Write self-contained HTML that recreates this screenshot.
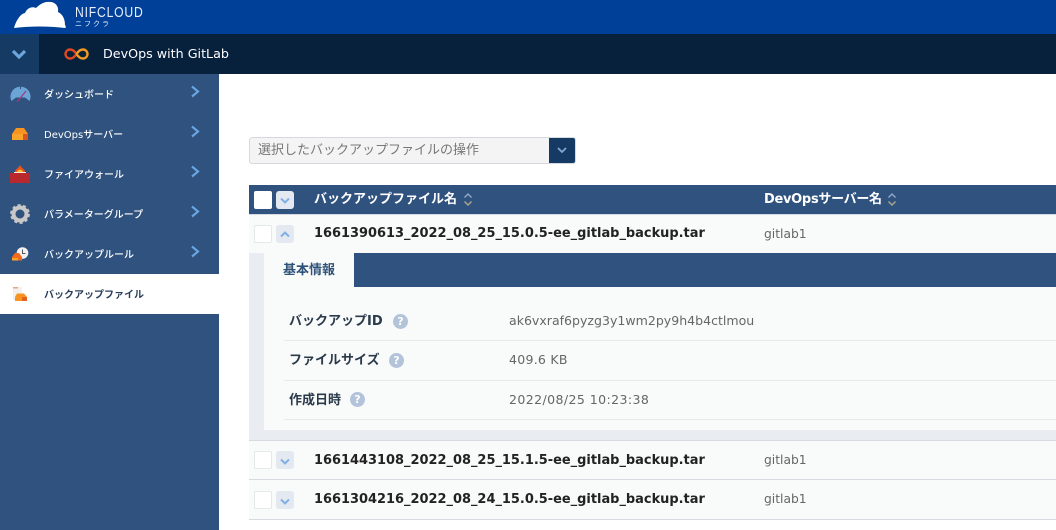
<!DOCTYPE html>
<html lang="ja"><head><meta charset="utf-8">
<style>
*{box-sizing:border-box;margin:0;padding:0}
html,body{width:1056px;height:530px;overflow:hidden;background:#fff}
body{position:relative;font-family:"DejaVu Sans","Noto Sans CJK JP",sans-serif;font-size:13px}
.a{position:absolute;white-space:nowrap}
.nav{left:44px;font-size:10px;color:#fff;line-height:16px;font-weight:500}
.chev{left:190px}
.cb{position:absolute;width:18px;height:18px;background:#fff;border:1px solid #e6e9ec;border-radius:2px;left:254px}
.tg{position:absolute;width:18px;height:18px;background:#e4e9f1;border-radius:3px;left:276px}
.fn{left:314px;font-size:12.95px;font-weight:700;color:#222;line-height:18px;font-family:"DejaVu Sans",sans-serif}
.sv{left:764px;font-size:12.3px;color:#666;line-height:18px}
.lb{left:289px;font-size:13px;font-weight:700;color:#2b3a4a;line-height:18px}
.val{left:509px;font-size:12.55px;color:#666;line-height:18px}
.q{position:absolute;width:15px;height:15px;border-radius:50%;background:#b3c3da;color:#fff;font-size:11px;font-weight:700;text-align:center;line-height:15px}
.hl{position:absolute;left:284px;right:0;height:1px;background:#e6e9ec}
</style></head><body>
<div class="a" style="left:0;top:0;width:1056px;height:34px;background:#004098"></div>
<svg class="a" style="left:13px;top:0" width="56" height="30" viewBox="0 0 56 30"><path d="M1 28C3 21 7 14 12 13C14 8 19 6 23 8C26 5 31 1 37 2C42 2 46 6 45 12C49 14 52 18 52 25C53 26 53 28 52 28C36 26 17 26 1 28Z" fill="#fff"/></svg>
<div class="a" style="left:75px;top:4px;font-size:15px;color:#e8eefa;letter-spacing:1px;line-height:17px;font-family:'Liberation Sans',sans-serif;transform:scaleX(.81);transform-origin:left top">NIFCLOUD</div>
<div class="a" style="left:75px;top:20px;font-size:7px;color:#e8eefa;letter-spacing:2px;line-height:9px">ニフクラ</div>
<div class="a" style="left:0;top:34px;width:1056px;height:40px;background:#07203c"></div>
<div class="a" style="left:0;top:34px;width:39px;height:40px;background:#153a63"></div>
<svg class="a" style="left:11px;top:48px" width="16" height="12" viewBox="0 0 16 12"><path d="M2 3L8 9L14 3" fill="none" stroke="#6aa5dc" stroke-width="3.2"/></svg>
<svg class="a" style="left:64px;top:47px" width="25" height="14" viewBox="0 0 25 14"><path d="M12.5 7C10 3 8 2.500 6 2.500A4.500 4.500 0 0 0 6 11.500C8 11.500 10 11 12.500 7" fill="none" stroke="#e2481f" stroke-width="2.400"/><path d="M12.500 7C15 3 17 2.500 19 2.500A4.500 4.500 0 0 1 19 11.500C17 11.500 15 11 12.500 7" fill="none" stroke="#f39a1f" stroke-width="2.400"/></svg>
<div class="a" style="left:103px;top:45px;font-size:12.7px;color:#fff;line-height:18px">DevOps with GitLab</div>

<div class="a" style="left:0;top:74px;width:219px;height:456px;background:#30527f"></div>
<div class="a" style="left:0;top:274px;width:219px;height:40px;background:#fff"></div>

<svg class="a" style="left:10px;top:84px" width="21" height="20" viewBox="0 0 21 20"><path d="M1.500 17A10 10 0 1 1 19.500 17L15 13.500H6Z" fill="#6ba5d8"/><path d="M7 18L16 7" stroke="#a83a7c" stroke-width="1.300"/><path d="M10.500 2V5" stroke="#30527f"/></svg>
<div class="a nav" style="top:88px">ダッシュボード</div>
<svg class="a" style="left:12px;top:128px" width="16" height="12" viewBox="0 0 16 12"><path d="M0 12V6L4 0H12L16 6V12Z" fill="#f7931e"/><rect x="0" y="6" width="11" height="6" fill="#f9a52b"/><rect x="11" y="6" width="5" height="6" fill="#d9541e"/></svg>
<div class="a nav" style="top:128px">DevOpsサーバー</div>
<svg class="a" style="left:10px;top:165px" width="20" height="18" viewBox="0 0 20 18"><rect y="8" width="20" height="10" fill="#b8282c"/><path d="M5 7C5 4 8 4 10 0C12 4 15 4 15 7Z" fill="#e8541e"/><path d="M7 7C8 4 12 4 13 7Z" fill="#fbc02d"/><rect x="4" y="7" width="12" height="1" fill="#f2e6d8"/></svg>
<div class="a nav" style="top:168px">ファイアウォール</div>
<svg class="a" style="left:10px;top:204px" width="20" height="20" viewBox="0 0 20 20"><circle cx="10" cy="10" r="6.500" fill="none" stroke="#c8c8c8" stroke-width="4"/><circle cx="10" cy="10" r="8.700" fill="none" stroke="#c8c8c8" stroke-width="2.400" stroke-dasharray="3 2.470"/></svg>
<div class="a nav" style="top:208px">パラメーターグループ</div>
<svg class="a" style="left:12px;top:247px" width="17" height="15" viewBox="0 0 17 15"><circle cx="10.500" cy="6" r="5.800" fill="#f2f2f2"/><path d="M10.500 2.500V6.500H13.500" fill="none" stroke="#555" stroke-width="1"/><path d="M0 13.500V10L3 6H7L10 10V13.500Z" fill="#f26a1b"/><path d="M0 13.500V11H6V13.500Z" fill="#f9a52b"/></svg>
<div class="a nav" style="top:248px">バックアップルール</div>
<svg class="a" style="left:13px;top:287px" width="15" height="15" viewBox="0 0 15 15"><rect x="0" y="0" width="9" height="13" fill="#f3f0ee"/><rect x="0" y="0" width="5" height="1.500" fill="#e8a58c"/><path d="M2 14V10L4 6.500H11L14 10V14Z" fill="#f7931e"/><rect x="9" y="10" width="5" height="4" fill="#e2621e"/></svg>
<div class="a nav" style="top:288px;color:#2b3f5c;font-weight:700">バックアップファイル</div>

<svg class="a chev" style="top:85px" width="11" height="13" viewBox="0 0 11 13"><path d="M2 1.500L8 6.500L2 11.500" fill="none" stroke="#6aa5e0" stroke-width="2.200"/></svg>
<svg class="a chev" style="top:125px" width="11" height="13" viewBox="0 0 11 13"><path d="M2 1.500L8 6.500L2 11.500" fill="none" stroke="#6aa5e0" stroke-width="2.200"/></svg>
<svg class="a chev" style="top:165px" width="11" height="13" viewBox="0 0 11 13"><path d="M2 1.500L8 6.500L2 11.500" fill="none" stroke="#6aa5e0" stroke-width="2.200"/></svg>
<svg class="a chev" style="top:205px" width="11" height="13" viewBox="0 0 11 13"><path d="M2 1.500L8 6.500L2 11.500" fill="none" stroke="#6aa5e0" stroke-width="2.200"/></svg>
<svg class="a chev" style="top:245px" width="11" height="13" viewBox="0 0 11 13"><path d="M2 1.500L8 6.500L2 11.500" fill="none" stroke="#6aa5e0" stroke-width="2.200"/></svg>

<div class="a" style="left:249px;top:137px;width:327px;height:27px;background:#f4f4f4;border:1px solid #d5d8dc;border-radius:3px"></div>
<div class="a" style="left:549px;top:138px;width:26px;height:25px;background:#153a63;border-radius:0 2px 2px 0"></div>
<svg class="a" style="left:556px;top:146px" width="12" height="9" viewBox="0 0 12 9"><path d="M2 2L6 6L10 2" fill="none" stroke="#7fa9d6" stroke-width="1.800"/></svg>
<div class="a" style="left:258px;top:142px;font-size:13px;color:#777;line-height:18px">選択したバックアップファイルの操作</div>

<div class="a" style="left:249px;top:185px;width:807px;height:29px;background:#30527f"></div>
<div class="a" style="left:249px;top:214px;width:807px;height:1px;background:#d5dae3"></div>
<div class="a" style="left:249px;top:215px;width:807px;height:225px;background:#f9fafa"></div>
<div class="cb" style="top:191px;border:0"></div>
<div class="tg" style="top:191px"></div>
<svg class="a" style="left:279px;top:196px" width="12" height="9" viewBox="0 0 12 9"><path d="M2 2.500L6 6.500L10 2.500" fill="none" stroke="#7fb0e6" stroke-width="2"/></svg>
<div class="a" style="left:314px;top:191px;font-size:13px;font-weight:700;color:#fff;line-height:18px">バックアップファイル名</div>
<svg class="a" style="left:463px;top:192px" width="10" height="15" viewBox="0 0 10 15"><path d="M1.500 5.500L5 2L8.500 5.500" fill="none" stroke="#8ea6c4" stroke-width="1.500"/><path d="M1.500 9.500L5 13L8.500 9.500" fill="none" stroke="#a9a48a" stroke-width="1.500"/></svg>
<div class="a" style="left:764px;top:191px;font-size:13px;font-weight:700;color:#fff;line-height:18px;letter-spacing:-.3px">DevOpsサーバー名</div>
<svg class="a" style="left:887px;top:192px" width="10" height="15" viewBox="0 0 10 15"><path d="M1.500 5.500L5 2L8.500 5.500" fill="none" stroke="#8ea6c4" stroke-width="1.500"/><path d="M1.500 9.500L5 13L8.500 9.500" fill="none" stroke="#a9a48a" stroke-width="1.500"/></svg>

<div class="cb" style="top:225px"></div>
<div class="tg" style="top:225px"></div>
<svg class="a" style="left:279px;top:230px" width="12" height="9" viewBox="0 0 12 9"><path d="M2 6.500L6 2.500L10 6.500" fill="none" stroke="#7fb0e6" stroke-width="2"/></svg>
<div class="a fn" style="top:225px">1661390613_2022_08_25_15.0.5-ee_gitlab_backup.tar</div>
<div class="a sv" style="top:225px">gitlab1</div>

<div class="a" style="left:249px;top:253px;width:807px;height:187px;background:#e9ecf0"></div>
<div class="a" style="left:264px;top:253px;width:792px;height:177px;background:#f9fafa"></div>
<div class="a" style="left:354px;top:253px;width:702px;height:34px;background:#30527f"></div>
<div class="a" style="left:283px;top:262px;font-size:13px;font-weight:700;color:#2f5278;line-height:18px">基本情報</div>

<div class="a lb" style="top:313px">バックアップID</div><div class="q" style="left:393px;top:314px">?</div>
<div class="a val" style="top:312px">ak6vxraf6pyzg3y1wm2py9h4b4ctlmou</div>
<div class="hl" style="top:340px"></div>
<div class="a lb" style="top:352px">ファイルサイズ</div><div class="q" style="left:389px;top:353px">?</div>
<div class="a val" style="top:351px;letter-spacing:.25px">409.6 KB</div>
<div class="hl" style="top:380px"></div>
<div class="a lb" style="top:392px">作成日時</div><div class="q" style="left:350px;top:392px">?</div>
<div class="a val" style="top:391px;letter-spacing:.4px">2022/08/25 10:23:38</div>
<div class="hl" style="top:419px"></div>

<div class="a" style="left:249px;top:440px;width:807px;height:1px;background:#d5dae3"></div>
<div class="a" style="left:249px;top:441px;width:807px;height:78px;background:#f9fafa"></div>
<div class="a" style="left:249px;top:479px;width:807px;height:1px;background:#d5dae3"></div>
<div class="a" style="left:249px;top:519px;width:807px;height:1px;background:#d5dae3"></div>

<div class="cb" style="top:451px"></div>
<div class="tg" style="top:451px"></div>
<svg class="a" style="left:279px;top:457px" width="12" height="9" viewBox="0 0 12 9"><path d="M2 2.500L6 6.500L10 2.500" fill="none" stroke="#7fb0e6" stroke-width="2"/></svg>
<div class="a fn" style="top:452px">1661443108_2022_08_25_15.1.5-ee_gitlab_backup.tar</div>
<div class="a sv" style="top:451px">gitlab1</div>

<div class="cb" style="top:491px"></div>
<div class="tg" style="top:491px"></div>
<svg class="a" style="left:279px;top:497px" width="12" height="9" viewBox="0 0 12 9"><path d="M2 2.500L6 6.500L10 2.500" fill="none" stroke="#7fb0e6" stroke-width="2"/></svg>
<div class="a fn" style="top:491px">1661304216_2022_08_24_15.0.5-ee_gitlab_backup.tar</div>
<div class="a sv" style="top:490px">gitlab1</div>
</body></html>
